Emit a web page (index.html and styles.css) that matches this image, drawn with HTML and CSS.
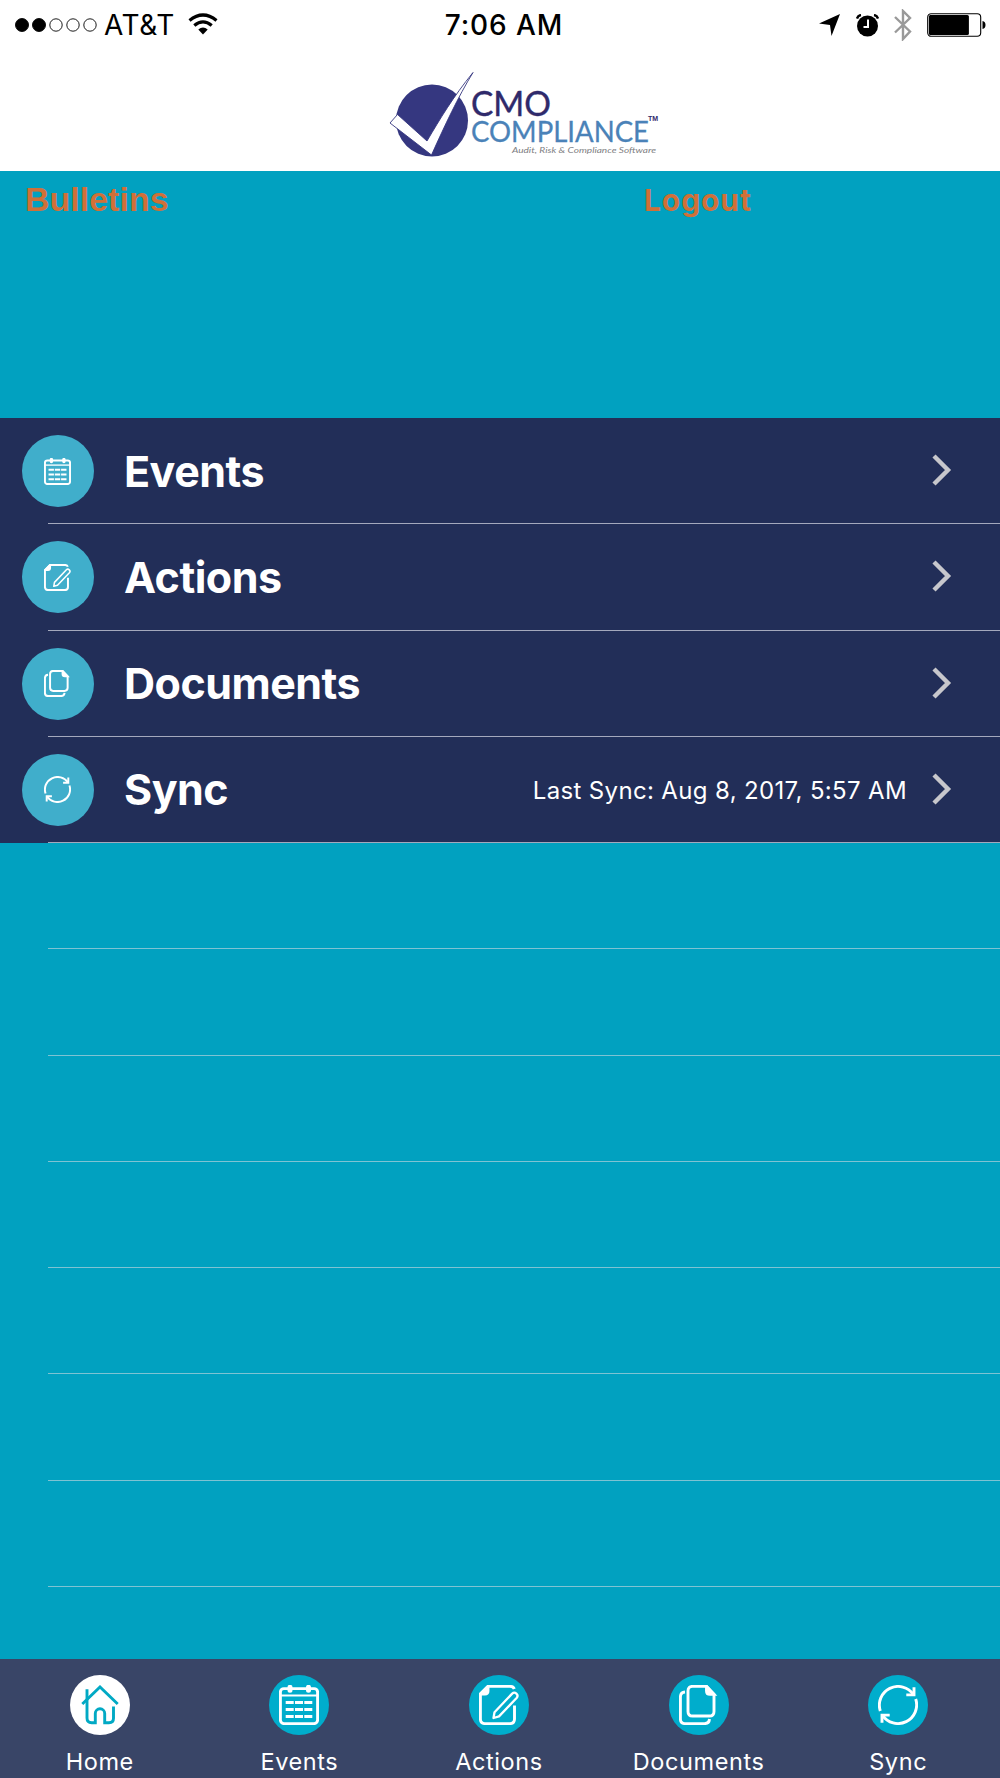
FILE: index.html
```html
<!DOCTYPE html>
<html lang="en">

<head>
    <meta charset="UTF-8">
    <meta name="viewport" content="width=device-width, initial-scale=1.0">
    <title>CMO Compliance</title>
    <link rel="stylesheet" href="styles.css">
</head>

<body>

    <!-- Shared icons -->
    <svg class="sprite" width="0" height="0">
        <symbol id="icon-home" viewBox="0 0 40 40">
            <path d="M2.3 19L20 2l17.7 17" />
            <path d="M7 4.3V33q0 4.7 4.7 4.7h3.6v-9.2a4.7 4.7 0 0 1 9.4 0v9.2H29q4.5 0 4.5-4.5V21.5" />
        </symbol>
        <symbol id="icon-events" viewBox="0 0 40 40">
            <rect x="1.4" y="3.6" width="37.2" height="35" rx="3.5" />
            <path d="M1.4 10.5h37.2" stroke-width="2" />
            <path d="M11 2.3v3M29.5 2.3v3" stroke-width="5" stroke-linecap="round" />
            <path d="M6.7 17.5h8M16 17.5h8M25.3 17.5h8M6.7 24.5h8M16 24.5h8M25.3 24.5h8M6.7 31.5h8M16 31.5h8M25.3 31.5h8" stroke-width="3" />
        </symbol>
        <symbol id="icon-actions" viewBox="0 0 40 40">
            <path d="M35.5 20.5V34q0 4.6-4.6 4.6H6q-4.6 0-4.6-4.6V9L9 1.4h22q3.5 0 4.3 2.6" />
            <path d="M1.4 9L9 1.4V6q0 3-3 3z" fill="currentColor" />
            <path d="M14.5 33l1-5.8L33.2 8.6q2-2 4.2 0t.2 4.4L20 31.4z" stroke-width="2.3" stroke-linejoin="round" />
        </symbol>
        <symbol id="icon-documents" viewBox="0 0 40 40">
            <path d="M13.5 1.4h14l7.5 8v17q0 4.6-4.6 4.6H13.6Q9 31 9 26.4V6q0-4.6 4.5-4.6z" />
            <path d="M27.5 1.4V6q0 3.4 3.5 3.4h4z" fill="currentColor" />
            <path d="M6 7q-4.6.4-4.6 5v22q0 4.6 4.6 4.6h19.5q4.6 0 5-4.6" />
        </symbol>
        <symbol id="icon-sync" viewBox="0 0 40 40">
            <path d="M2.3 26A18.7 18.7 0 0 1 35.5 9.6M37.7 14A18.7 18.7 0 0 1 4.5 30.4" />
            <path d="M36 2.3v7.6h-7.7M4 37.7v-7.6h7.7" />
        </symbol>
        <symbol id="icon-chevron" viewBox="0 0 20 32">
            <path d="M2 2l14 14L2 30" />
        </symbol>
    </svg>

    <div class="status-bar">
        <div class="carrier">
            <svg class="signal" viewBox="0 0 82 14">
                <circle cx="7" cy="7" r="6.5" fill="#000" />
                <circle cx="24" cy="7" r="6.5" fill="#000" />
                <circle cx="41" cy="7" r="6.2" />
                <circle cx="58" cy="7" r="6.2" />
                <circle cx="75" cy="7" r="6.2" />
            </svg>
            <span class="carrier-name">AT&amp;T</span>
            <svg class="wifi" viewBox="0 0 30 22">
                <path d="M1.5 7.5q13.5-11 27 0M6.3 12.5q8.7-7.4 17.4 0" fill="none" stroke="#000" stroke-width="3.2" />
                <path d="M10.3 16.5q4.7-4 9.4 0L15 21.5z" />
            </svg>
        </div>
        <div class="time">7:06 AM</div>
        <div class="indicators">
            <svg width="21" height="22" viewBox="0 0 21 22">
                <path d="M21 0l-8.5 22L11 11 0 9.5z" />
            </svg>
            <svg class="alarm" width="23" height="23" viewBox="0 0 23 23">
                <circle cx="11.5" cy="12" r="10.5" />
                <path d="M1 4.5Q2 1.5 5 1M22 4.5Q21 1.5 18 1" fill="none" stroke="#000" stroke-width="2.4" />
                <path d="M12 5.5V13H7.5" fill="none" stroke="#fff" stroke-width="2" />
            </svg>
            <svg class="bluetooth" width="18" height="32" viewBox="0 0 18 32">
                <path d="M1 8l15 14.5L9 30V2l7 7L1 23.5" />
            </svg>
            <svg class="battery" width="59" height="24" viewBox="0 0 59 24">
                <rect x=".7" y=".7" width="53" height="22.6" rx="3.5" fill="none" stroke="#000" stroke-width="1.1" />
                <rect x="1.9" y="1.9" width="40" height="20.2" rx="1.5" />
                <path d="M55.5 8q3 .5 3 4t-3 4z" />
            </svg>
        </div>
    </div>

    <header>
        <svg class="logo" viewBox="0 0 310 121">
            <circle cx="62" cy="70.5" r="36" fill="#353780" />
            <path d="M103 22.500C83 47 70 69 57 91L27.500 64.500 20 73l41.500 32C75 75 88 47 103 22.500z" fill="#fff" stroke="#353780" stroke-width=".9" />
            <text class="logo-cmo" x="101" y="66" textLength="80" lengthAdjust="spacingAndGlyphs">CMO</text>
            <text class="logo-compliance" x="101" y="92" textLength="178" lengthAdjust="spacingAndGlyphs">COMPLIANCE</text>
            <text class="logo-tm" x="278" y="70.5">TM</text>
            <text class="logo-tagline" x="142" y="102.5" textLength="144" lengthAdjust="spacingAndGlyphs">Audit, Risk &amp; Compliance Software</text>
        </svg>
    </header>

    <section class="top-links">
        <a class="bulletins">Bulletins</a>
        <a class="logout">Logout</a>
    </section>

    <main>
        <div class="row item">
            <span class="circle"><svg><use href="#icon-events" /></svg></span>
            <h2>Events</h2>
            <svg class="chevron"><use href="#icon-chevron" /></svg>
        </div>
        <div class="row item">
            <span class="circle"><svg><use href="#icon-actions" /></svg></span>
            <h2>Actions</h2>
            <svg class="chevron"><use href="#icon-chevron" /></svg>
        </div>
        <div class="row item">
            <span class="circle"><svg><use href="#icon-documents" /></svg></span>
            <h2>Documents</h2>
            <svg class="chevron"><use href="#icon-chevron" /></svg>
        </div>
        <div class="row item">
            <span class="circle"><svg><use href="#icon-sync" /></svg></span>
            <h2>Sync</h2>
            <span class="last-sync">Last Sync: Aug 8, 2017, 5:57 AM</span>
            <svg class="chevron"><use href="#icon-chevron" /></svg>
        </div>
        <div class="row"></div>
        <div class="row"></div>
        <div class="row"></div>
        <div class="row"></div>
        <div class="row"></div>
        <div class="row"></div>
        <div class="row"></div>
    </main>

    <nav>
        <a class="active"><span class="circle"><svg><use href="#icon-home" /></svg></span>Home</a>
        <a><span class="circle"><svg><use href="#icon-events" /></svg></span>Events</a>
        <a><span class="circle"><svg><use href="#icon-actions" /></svg></span>Actions</a>
        <a><span class="circle"><svg><use href="#icon-documents" /></svg></span>Documents</a>
        <a><span class="circle"><svg><use href="#icon-sync" /></svg></span>Sync</a>
    </nav>

</body>

</html>
```
FILE: styles.css
```css
* {
    box-sizing: border-box;
}

body {
    display: flex;
    flex-direction: column;
    height: 1778px;
    margin: 0;
    font-family: Inter, "Liberation Sans", sans-serif;
    background-color: #01a1c0;
    color: white;
    overflow: hidden;
}

svg {
    display: block;
    flex: none;
}

.sprite {
    position: absolute;
}

symbol {
    overflow: visible;
}

/* Status bar */
.status-bar {
    display: grid;
    grid-template-columns: 1fr auto 1fr;
    align-items: center;
    height: 50px;
    padding: 0 14px 1px 16px;
    background-color: white;
    color: black;
    font-size: 28px;
    line-height: 50px;
}

.carrier {
    display: flex;
    align-items: center;
}

.signal {
    width: 82px;
    height: 14px;
    margin-left: -1px;
    fill: none;
    stroke: #000;
    stroke-width: 0.9;
}

.carrier-name {
    margin-left: 7px;
    letter-spacing: 0.6px;
}

.wifi {
    width: 30px;
    height: 22px;
    margin-left: 13px;
    margin-bottom: 2px;
}

.time {
    margin-left: 6px;
    font-weight: 500;
    letter-spacing: 0.9px;
}

.indicators {
    display: flex;
    align-items: center;
    justify-content: flex-end;
}

.alarm {
    margin-left: 16px;
}

.bluetooth {
    margin-left: 15px;
    fill: none;
    stroke: #999;
    stroke-width: 2.4;
}

.battery {
    margin-left: 15px;
}

/* Logo */
header {
    height: 121px;
    padding-left: 370px;
    background-color: white;
    border-bottom: 1px solid #fff;
}

.logo {
    width: 310px;
    height: 121px;
}

.logo-cmo {
    font: 34px Lato, sans-serif;
    fill: #2f2a6b;
    stroke: #2f2a6b;
    stroke-width: 0.4;
}

.logo-compliance {
    font: 29px Lato, sans-serif;
    fill: #4a82b8;
    stroke: #4a82b8;
    stroke-width: 0.3;
}

.logo-tm {
    font: bold 7px "Liberation Sans", sans-serif;
    fill: #2f2a6b;
}

.logo-tagline {
    font: italic 8.5px Lato, sans-serif;
    fill: #808083;
}

.top-links {
    display: flex;
    align-items: baseline;
    height: 247px;
    padding: 9px 0 0 25px;
    color: #d07038;
    font-weight: bold;
}

.bulletins {
    width: 619px;
    font-family: "Liberation Sans", sans-serif;
    font-size: 34px;
}

.logout {
    font-size: 30px;
    line-height: 34px;
    letter-spacing: 0.9px;
}

/* List */
main {
    flex: 1;
}

.row {
    display: flex;
    align-items: center;
    height: 106.25px;
    padding: 0 48px 0 22px;
    background: linear-gradient(#7fc3d3, #7fc3d3) 48px 100% / 100% 1px no-repeat;
}

.item {
    background-color: #222e58;
    background-image: linear-gradient(#a4a9bd, #a4a9bd);
}

.circle {
    display: flex;
    align-items: center;
    justify-content: center;
    width: 72px;
    height: 72px;
    border-radius: 50%;
    background-color: #40aecb;
}

.circle svg {
    width: 27px;
    height: 27px;
    margin-right: 1px;
    fill: none;
    stroke: currentColor;
    stroke-width: 2.9;
}

.row h2 {
    flex: 1;
    margin: 0 0 1px 30px;
    font-size: 43px;
    font-weight: 700;
    letter-spacing: -0.5px;
}

.last-sync {
    margin-right: 25px;
    padding-top: 2px;
    font-size: 24px;
    letter-spacing: 0.35px;
}

.chevron {
    width: 20px;
    height: 32px;
    margin-bottom: 2px;
    fill: none;
    stroke: #c7c7cc;
    stroke-width: 4.4;
}

/* Tab bar */
nav {
    display: flex;
    height: 119px;
    padding-right: 2px;
    background-color: #394567;
}

nav a {
    flex: 1;
    display: flex;
    flex-direction: column;
    align-items: center;
    padding-top: 16px;
    font-size: 23.5px;
    line-height: 28px;
    letter-spacing: 0.6px;
}

nav .circle {
    width: 60px;
    height: 60px;
    margin-bottom: 13px;
    background-color: #00adcc;
}

nav .circle svg {
    width: 40px;
    height: 40px;
    margin-right: 0;
}

nav .active .circle {
    background-color: white;
    color: #01a9c4;
}
```
